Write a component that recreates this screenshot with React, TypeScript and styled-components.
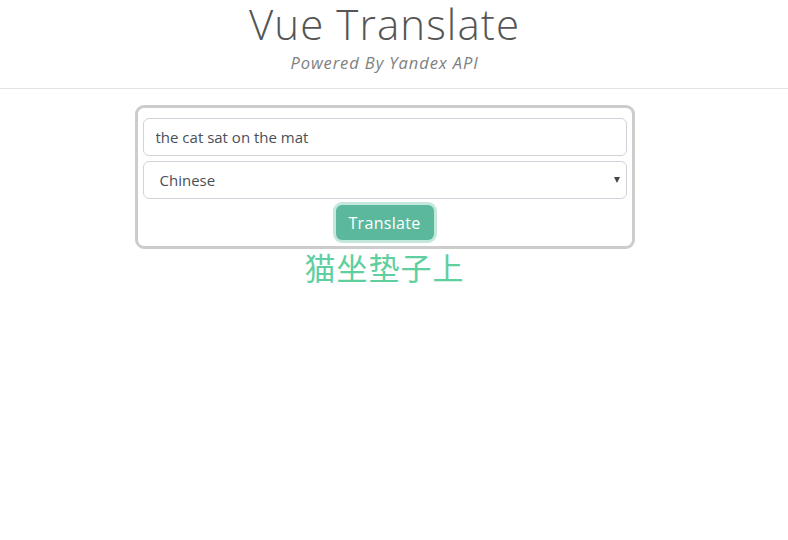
import React, { useState } from "react";
import styled, { createGlobalStyle } from "styled-components";

const Global = createGlobalStyle`
  html, body { margin: 0; padding: 0; background: #fff; }
  body { font-family: "Open Sans", "Noto Sans", sans-serif; color: #495057; }
  * { box-sizing: border-box; }
`;

const Page = styled.div`
  width: 769px;
`;

const Header = styled.header`
  width: 788px;
  border-bottom: 1px solid #e3e3e3;
  height: 89px;
`;

const HeaderInner = styled.div`
  width: 769px;
  display: flex;
  flex-direction: column;
  align-items: center;
`;

const Title = styled.h1`
  margin: 0;
  font-family: "Open Sans", sans-serif;
  font-weight: 300;
  font-size: 42px;
  line-height: 47px;
  letter-spacing: 1.1px;
  color: #555;
`;

const Subtitle = styled.p`
  margin: 5px 0 0;
  font-family: "Open Sans", sans-serif;
  font-style: italic;
  font-weight: 400;
  font-size: 16.5px;
  line-height: 22px;
  letter-spacing: 0.9px;
  color: #808080;
`;

const Main = styled.main`
  display: flex;
  flex-direction: column;
  align-items: center;
  padding-top: 16px;
`;

const Card = styled.form`
  width: 500px;
  border: 3px solid #cccccc;
  border-radius: 9px;
  padding: 10px 5px 3px;
  display: flex;
  flex-direction: column;
  gap: 5px;
  align-items: stretch;
`;

const field = `
  width: 100%;
  height: 38px;
  border: 1px solid #ced4da;
  border-radius: 6px;
  background: #fff;
  font-family: "Open Sans", "Noto Sans", sans-serif;
  font-size: 15px;
  color: #495057;
  outline: none;
`;

const TextInput = styled.input`
  ${field}
  padding: 0 12px;
`;

const SelectWrap = styled.div`
  position: relative;
`;

const Select = styled.select`
  ${field}
  appearance: none;
  padding: 0 16px;
`;

const Caret = styled.span`
  position: absolute;
  right: 7px;
  top: 16px;
  width: 0;
  height: 0;
  border-left: 3px solid transparent;
  border-right: 3px solid transparent;
  border-top: 6px solid #444;
  pointer-events: none;
`;

const ButtonRow = styled.div`
  display: flex;
  justify-content: center;
  margin-top: -2px;
`;

const Button = styled.button`
  height: 35px;
  padding: 0 13px;
  margin: 3px;
  border: none;
  border-radius: 6px;
  background: #5cb89c;
  color: #fff;
  font-family: "Open Sans", sans-serif;
  font-size: 16px;
  letter-spacing: 0.3px;
  box-shadow: 0 0 0 3px #c5e8dd;
  cursor: pointer;
`;

const Result = styled.h2`
  margin: 0;
  font-family: "Noto Sans CJK SC", sans-serif;
  font-weight: 400;
  font-size: 31px;
  line-height: 36px;
  color: #5fcfa0;
  letter-spacing: 1px;
`;

export default function App() {
  const [text, setText] = useState("the cat sat on the mat");
  const [lang, setLang] = useState("zh");
  return (
    <>
      <Global />
      <Header>
        <HeaderInner>
          <Title>Vue Translate</Title>
          <Subtitle>Powered By Yandex API</Subtitle>
        </HeaderInner>
      </Header>
      <Page>
        <Main>
          <Card onSubmit={(e) => e.preventDefault()}>
            <TextInput value={text} onChange={(e) => setText(e.target.value)} />
            <SelectWrap>
              <Select value={lang} onChange={(e) => setLang(e.target.value)}>
                <option value="zh">Chinese</option>
                <option value="en">English</option>
                <option value="fr">French</option>
              </Select>
              <Caret />
            </SelectWrap>
            <ButtonRow>
              <Button type="submit">Translate</Button>
            </ButtonRow>
          </Card>
          <Result>猫坐垫子上</Result>
        </Main>
      </Page>
    </>
  );
}
